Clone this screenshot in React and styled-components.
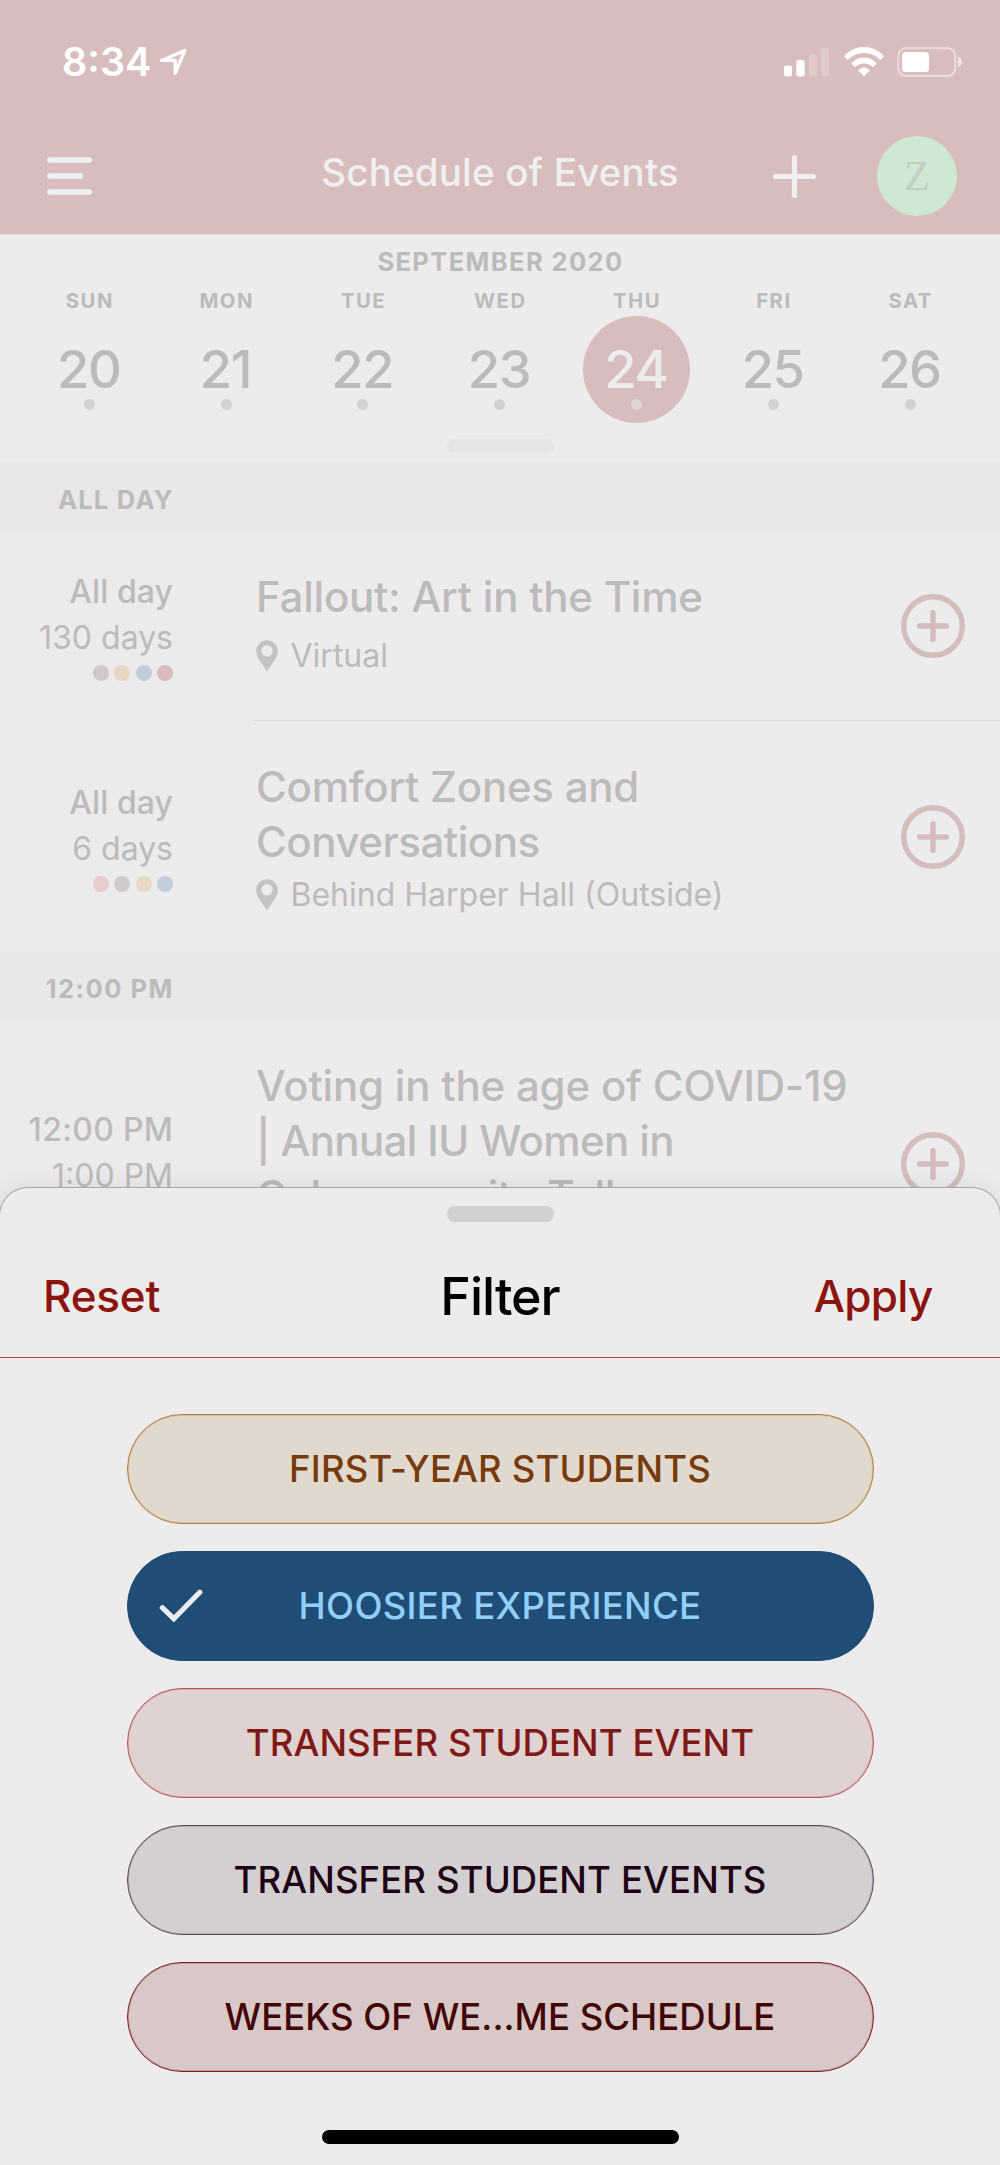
import React from "react";
import styled, { createGlobalStyle } from "styled-components";

const GlobalStyle = createGlobalStyle`
  * { box-sizing: border-box; }
  body {
    margin: 0;
    background: #edebeb;
    font-family: Inter, "Liberation Sans", sans-serif;
    -webkit-font-smoothing: antialiased;
  }
  button {
    border: 0;
    padding: 0;
    background: none;
    font: inherit;
    color: inherit;
    display: block;
  }
  svg { display: block; }
`;

const Screen = styled.div`
  position: relative;
  width: 1000px;
  height: 2165px;
  overflow: hidden;
  background: #edebeb;
  color: #bbbbbb;
`;

const TopBar = styled.header`
  height: 234px;
  background: #d8bdbd;
`;

const StatusBar = styled.div`
  display: flex;
  align-items: center;
  gap: 6.5px;
  height: 116px;
  padding: 7px 37px 0 62px;
  color: #fff;
`;

const Clock = styled.span`
  font-size: 39.5px;
  font-weight: 600;
  line-height: 44px;
`;

const StatusIcons = styled.div`
  display: flex;
  align-items: center;
  gap: 13.5px;
  margin-left: auto;
`;

const NavBar = styled.div`
  display: grid;
  grid-template-columns: 1fr auto 1fr;
  align-items: center;
  height: 118px;
  padding: 2px 43px 0;
`;

const NavTitle = styled.h1`
  margin: 0 0 8px;
  font-size: 38.5px;
  font-weight: 500;
  letter-spacing: 0.17px;
  line-height: 44px;
  color: #f0efef;
`;

const MenuButton = styled.button`
  width: 45px;
  margin-left: 3.5px;
`;

const NavActions = styled.div`
  display: flex;
  justify-content: flex-end;
  align-items: center;
  gap: 61px;
`;

const Avatar = styled.div`
  width: 80px;
  height: 80px;
  border-radius: 50%;
  background: #cfe8d2;
  color: #c4cdc4;
  font-family: "Liberation Serif", serif;
  font-size: 42px;
  line-height: 80px;
  text-align: center;
`;

const Calendar = styled.section`
  height: 229px;
  padding: 10.5px 21px 0;
  border-top: 1px solid #eae0e0;
`;

const Month = styled.div`
  font-size: 25.5px;
  font-weight: 700;
  letter-spacing: 1.4px;
  text-indent: 1px;
  line-height: 32px;
  text-align: center;
`;

const Week = styled.div`
  display: grid;
  grid-template-columns: repeat(7, 136.8px);
  margin-top: 11px;
`;

const Day = styled.div`
  display: flex;
  flex-direction: column;
  align-items: center;
`;

const DayName = styled.div`
  font-size: 20.3px;
  font-weight: 700;
  letter-spacing: 1.5px;
  text-indent: 1px;
  line-height: 24px;
`;

const DayDisc = styled.div`
  display: flex;
  flex-direction: column;
  align-items: center;
  width: 107px;
  height: 107px;
  margin-top: 3px;
  padding-top: 30px;
  border-radius: 50%;
  background: ${(p) => (p.$selected ? "#d8bdbd" : "transparent")};
  color: ${(p) => (p.$selected ? "#edebeb" : "inherit")};
`;

const DayNumber = styled.span`
  font-size: 52.5px;
  font-weight: 500;
  letter-spacing: -1.4px;
  text-indent: -1.4px;
  line-height: 46px;
`;

const DayDot = styled.i`
  width: 11px;
  height: 11px;
  margin-top: 7px;
  border-radius: 50%;
  background: ${(p) => (p.$selected ? "#e2d3d3" : "#d3d2d2")};
`;

const CalendarHandle = styled.div`
  width: 107px;
  height: 14px;
  margin: 16px auto 0;
  border-radius: 7px;
  background: #e6e5e5;
`;

const SectionBand = styled.div`
  height: ${(p) => p.$height}px;
  padding-right: 827.7px;
  background: #e9e7e8;
  font-size: 25.5px;
  font-weight: 700;
  line-height: ${(p) => p.$line}px;
  text-align: right;
  white-space: nowrap;
`;

const Spaced = styled.span`
  display: block;
  letter-spacing: ${(p) => p.$ls}px;
  margin-right: ${(p) => -p.$ls}px;
`;

const EventRow = styled.article`
  display: flex;
  height: ${(p) => p.$height}px;
`;

const TimeColumn = styled.div`
  display: flex;
  flex-direction: column;
  justify-content: center;
  align-items: flex-end;
  flex: none;
  width: 216px;
  padding: 0 43px 2px 0;
  background: #eceaeb;
`;

const TimeLine = styled.div`
  font-size: 32px;
  font-weight: ${(p) => (p.$strong ? 500 : 400)};
  line-height: 46px;
  white-space: nowrap;
`;

const Tags = styled.div`
  display: flex;
  gap: 5.3px;
  height: 16px;
  margin-top: 4px;
`;

const Tag = styled.i`
  width: 16px;
  height: 16px;
  border-radius: 50%;
  background: ${(p) => p.$color};
`;

const EventBody = styled.div`
  display: flex;
  flex: 1;
  margin-left: 37px;
  padding-right: 35px;
  border-bottom: ${(p) => (p.$divided ? "1px solid #dddcdc" : "0")};
`;

const EventText = styled.div`
  flex: 1;
  padding: 37.5px 0 0 3px;
`;

const EventTitle = styled.h2`
  margin: 0;
  font-size: 42px;
  font-weight: 500;
  line-height: 55px;
  white-space: nowrap;
`;

const Place = styled.div`
  display: flex;
  align-items: center;
  gap: 12.5px;
  margin-top: ${(p) => p.$gap}px;
  font-size: 32px;
  line-height: 40px;
`;

const AddButton = styled.button`
  align-self: center;
  flex: none;
  width: 64px;
  height: 64px;
`;

const Sheet = styled.section`
  position: absolute;
  inset: 1187.5px 0 0 0;
  display: flex;
  flex-direction: column;
  align-items: center;
  padding: 18.5px 0 21px;
  border-radius: 28px 28px 0 0;
  background: #edebeb;
  box-shadow: 0 0 0 1px #aaa9a9, 0 0 26px rgba(0, 0, 0, 0.09);
`;

const SheetHandle = styled.div`
  width: 107px;
  height: 16px;
  border-radius: 8px;
  background: #d2d0d1;
`;

const SheetHeader = styled.div`
  display: grid;
  grid-template-columns: 1fr auto 1fr;
  align-items: center;
  align-self: stretch;
  height: 136px;
  padding: 13px 43px 0;
  border-bottom: 1px solid #b4433c;
  box-shadow: 0 1px 0 #f1f6f4;
`;

const SheetTitle = styled.h2`
  margin: 2px 0 0;
  font-size: 52px;
  font-weight: 500;
  letter-spacing: -1px;
  line-height: 60px;
  color: #000;
`;

const SheetAction = styled.button`
  justify-self: ${(p) => (p.$end ? "end" : "start")};
  margin-right: ${(p) => (p.$end ? "24.5px" : "0")};
  font-size: 44px;
  font-weight: 500;
  letter-spacing: ${(p) => (p.$end ? "-0.7px" : "-0.2px")};
  line-height: 60px;
  color: #8b150d;
`;

const Filters = styled.div`
  display: flex;
  flex-direction: column;
  gap: 27px;
  margin-top: 56px;
`;

const Pill = styled.button`
  display: grid;
  grid-template-columns: 75px 1fr 75px;
  align-items: center;
  width: 747px;
  height: 110px;
  padding-bottom: 1px;
  border: 1px solid ${(p) => p.$line};
  border-radius: 55px;
  background: ${(p) => p.$fill};
  box-shadow: inset 0 0 0 1px ${(p) => p.$line}40;
  color: ${(p) => p.$ink};
  font-size: 36.5px;
  font-weight: 500;
  letter-spacing: ${(p) => p.$ls}px;
  line-height: 44px;
  white-space: nowrap;
`;

const PillLabel = styled.span`
  grid-column: 2;
  grid-row: 1;
  justify-self: center;
`;

const CheckSlot = styled.span`
  grid-column: 1;
  grid-row: 1;
  justify-self: end;
`;

const HomeIndicator = styled.div`
  width: 357px;
  height: 14px;
  margin-top: auto;
  border-radius: 7px;
  background: #000;
`;

const LocationArrow = () => (
  <svg width="30" height="30" viewBox="0 0 30 30" fill="none" stroke="#fff" strokeWidth="3.3" strokeLinejoin="round">
    <path d="M26.8 3.4 3.6 13.4H17.2V26.4Z" />
  </svg>
);

const Signal = () => (
  <svg width="46" height="30" viewBox="0 0 46 30" fill="#fff">
    <rect x="0" y="18.5" width="8" height="11" rx="2.2" />
    <rect x="12.3" y="13" width="8.4" height="16.5" rx="2.2" />
    <rect x="25" y="7" width="8" height="22.5" rx="2.2" opacity=".2" />
    <rect x="37" y="1" width="8" height="28.5" rx="2.2" opacity=".2" />
  </svg>
);

const Wifi = () => (
  <svg width="40" height="30" viewBox="0 0 40 30" fill="#fff">
    <path d="M0 9.4C11-3 29-3 40 9.4L36.3 13C27.4 3.8 12.6 3.8 3.7 13Z" />
    <path d="M7.2 16.3C14.5 8.4 25.5 8.4 32.8 16.3L29 20C24 15.2 16 15.2 11 20Z" />
    <path d="M14 23.3C17.5 19.7 22.5 19.7 26 23.3L20 29.5Z" />
  </svg>
);

const Battery = () => (
  <svg width="66" height="30" viewBox="0 0 66 30">
    <rect x="1.3" y="1.2" width="57" height="27.6" rx="7.5" fill="none" stroke="#fff" strokeOpacity=".45" strokeWidth="2.3" />
    <rect x="5" y="5" width="27" height="20" rx="3.5" fill="#fff" />
    <path d="M61 9.5C66.3 11.5 66.3 18.5 61 20.5Z" fill="#fff" opacity=".6" />
  </svg>
);

const MenuIcon = () => (
  <svg width="45" height="40" viewBox="0 0 45 40" stroke="#f0efef" strokeWidth="5.6" strokeLinecap="round">
    <path d="M2.8 4H42.2M2.8 20H33.2M2.8 36H42.2" />
  </svg>
);

const PlusIcon = () => (
  <svg width="43" height="43" viewBox="0 0 43 43" stroke="#f0efef" strokeWidth="5.2" strokeLinecap="round">
    <path d="M21.5 2.6V40.4M2.6 21.5H40.4" />
  </svg>
);

const AddIcon = () => (
  <svg width="64" height="64" viewBox="0 0 64 64" fill="none" stroke="#d3bebd" strokeWidth="5.4" strokeLinecap="round">
    <circle cx="32" cy="32" r="29.3" />
    <path d="M32 18.6V45.4M18.6 32H45.4" />
  </svg>
);

const Pin = () => (
  <svg width="22" height="32" viewBox="0 0 22 32" fill="#c4c3c3" fillRule="evenodd">
    <path d="M11 .2C5 .2 .2 5 .2 11C.2 18 6.5 23.5 11 31.8C15.5 23.5 21.8 18 21.8 11C21.8 5 17 .2 11 .2ZM11 5.2A5.7 5.7 0 1 1 11 16.6A5.7 5.7 0 1 1 11 5.2Z" />
  </svg>
);

const Check = () => (
  <svg width="44" height="33" viewBox="0 0 44 33" fill="none" stroke="#e9edf2" strokeWidth="5.2" strokeLinecap="round">
    <path d="M3.3 18.7 14.8 29.7 40.8 3.2" />
  </svg>
);

const DAYS = [
  ["SUN", 20], ["MON", 21], ["TUE", 22], ["WED", 23], ["THU", 24], ["FRI", 25], ["SAT", 26],
];
const SELECTED = 24;

const MUTED = { plum: "#cfc9cc", sand: "#e7d8c5", blue: "#bfced8", red: "#d9bcbe", pink: "#e7cdce" };

const EVENTS = [
  {
    height: 189.5,
    divided: true,
    start: "All day",
    startLs: 0.1,
    end: "130 days",
    tags: ["plum", "sand", "blue", "red"],
    title: [["Fallout: Art in the Time", -0.24]],
    place: "Virtual",
    placeGap: 11.5,
  },
  {
    height: 231,
    start: "All day",
    startLs: 0.1,
    end: "6 days",
    tags: ["pink", "plum", "sand", "blue"],
    title: [["Comfort Zones and", -0.25], ["Conversations", -0.46]],
    place: "Behind Harper Hall (Outside)",
    placeGap: 6,
  },
];

const LATER = {
  height: 288,
  start: "12:00 PM",
  startLs: 0.3,
  end: "1:00 PM",
  tags: ["plum", "blue"],
  title: [["Voting in the age of COVID-19", -0.2], ["| Annual IU Women in", -0.62], ["Cybersecurity Talk", -0.4]],
  place: "Virtual",
  placeGap: 6,
};

const FILTERS = [
  { label: "FIRST-YEAR STUDENTS", ls: 0.16, fill: "#e2d9ce", line: "#b07d35", ink: "#763a0c" },
  { label: "HOOSIER EXPERIENCE", ls: 0.32, fill: "#204d75", line: "#204d75", ink: "#92d0fb", on: true },
  { label: "TRANSFER STUDENT EVENT", ls: 0.07, fill: "#e1d2d2", line: "#b65454", ink: "#7d1917" },
  { label: "TRANSFER STUDENT EVENTS", ls: 0.12, fill: "#d4d0d1", line: "#5d4555", ink: "#1e0317" },
  { label: "WEEKS OF WE...ME SCHEDULE", ls: 0.02, fill: "#d8c8c8", line: "#7f1d1d", ink: "#430404" },
];

function Event({ item }) {
  return (
    <EventRow $height={item.height}>
      <TimeColumn>
        <TimeLine $strong>
          <Spaced $ls={item.startLs}>{item.start}</Spaced>
        </TimeLine>
        <TimeLine>{item.end}</TimeLine>
        <Tags>
          {item.tags.map((t) => <Tag key={t} $color={MUTED[t]} />)}
        </Tags>
      </TimeColumn>
      <EventBody $divided={item.divided}>
        <EventText>
          <EventTitle>
            {item.title.map(([text, ls]) => <Spaced key={text} $ls={ls}>{text}</Spaced>)}
          </EventTitle>
          <Place $gap={item.placeGap}>
            <Pin />
            {item.place}
          </Place>
        </EventText>
        <AddButton aria-label="Add"><AddIcon /></AddButton>
      </EventBody>
    </EventRow>
  );
}

export default function App() {
  return (
    <Screen>
      <GlobalStyle />
      <TopBar>
        <StatusBar>
          <Clock>8:34</Clock>
          <LocationArrow />
          <StatusIcons>
            <Signal />
            <Wifi />
            <Battery />
          </StatusIcons>
        </StatusBar>
        <NavBar>
          <MenuButton aria-label="Menu"><MenuIcon /></MenuButton>
          <NavTitle>Schedule of Events</NavTitle>
          <NavActions>
            <button aria-label="New"><PlusIcon /></button>
            <Avatar>Z</Avatar>
          </NavActions>
        </NavBar>
      </TopBar>

      <Calendar>
        <Month>SEPTEMBER 2020</Month>
        <Week>
          {DAYS.map(([name, n]) => (
            <Day key={n}>
              <DayName>{name}</DayName>
              <DayDisc $selected={n === SELECTED}>
                <DayNumber>{n}</DayNumber>
                <DayDot $selected={n === SELECTED} />
              </DayDisc>
            </Day>
          ))}
        </Week>
        <CalendarHandle />
      </Calendar>

      <SectionBand $height={68.5} $line={74}><Spaced $ls={1.25}>ALL DAY</Spaced></SectionBand>
      {EVENTS.map((e) => <Event key={e.place} item={e} />)}
      <SectionBand $height={68} $line={73}><Spaced $ls={1.5}>12:00 PM</Spaced></SectionBand>
      <Event item={LATER} />

      <Sheet>
        <SheetHandle />
        <SheetHeader>
          <SheetAction>Reset</SheetAction>
          <SheetTitle>Filter</SheetTitle>
          <SheetAction $end>Apply</SheetAction>
        </SheetHeader>
        <Filters>
          {FILTERS.map((f) => (
            <Pill key={f.label} $fill={f.fill} $line={f.line} $ink={f.ink} $ls={f.ls}>
              {f.on && <CheckSlot><Check /></CheckSlot>}
              <PillLabel>{f.label}</PillLabel>
            </Pill>
          ))}
        </Filters>
        <HomeIndicator />
      </Sheet>
    </Screen>
  );
}
